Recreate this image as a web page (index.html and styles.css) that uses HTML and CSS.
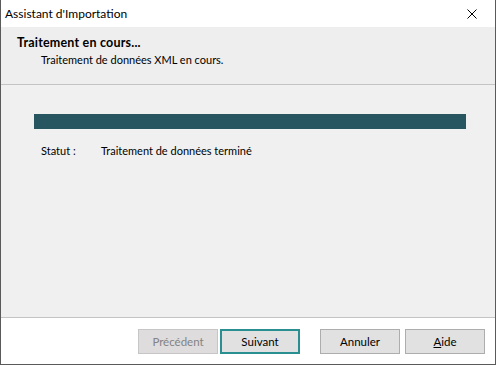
FILE: index.html
```html
<!DOCTYPE html>
<html lang="fr">
<head>
    <meta charset="UTF-8">
    <meta name="viewport" content="width=device-width, initial-scale=1.0">
    <link rel="stylesheet" href="styles.css">
    <title>Assistant d'Importation</title>
</head>
<body>
    <div id="window">
        <div id="titlebar">
            <span class="title">Assistant d'Importation</span>
            <button class="closeBtn" title="Fermer">
                <svg width="10" height="10" viewBox="0 0 10 10">
                    <path d="M0.5 0.5 L9.5 9.5 M9.5 0.5 L0.5 9.5" stroke="#000" stroke-width="1" fill="none"/>
                </svg>
            </button>
        </div>

        <div id="header">
            <div class="headTitle">Traitement en cours...</div>
            <div class="headSub">Traitement de données XML en cours.</div>
        </div>

        <div id="content">
            <div class="progress"><div class="progressFill"></div></div>
            <div class="status">
                <span class="statusLabel">Statut :</span>
                <span>Traitement de données terminé</span>
            </div>
        </div>

        <div id="footer">
            <button class="btn" disabled>Précédent</button>
            <button class="btn defaultBtn">Suivant</button>
            <button class="btn cancelBtn">Annuler</button>
            <button class="btn helpBtn"><u>A</u>ide</button>
        </div>
    </div>
</body>
</html>
```

FILE: styles.css
```css
body{
    margin: 0;
    padding: 0;
    background-color: #ffffff;
    font-family: Lato, "Open Sans", Arial, sans-serif;
    font-size: 11px;
    color: #000000;
}

#window{
    width: 496px;
    height: 365px;
    box-sizing: border-box;
    border: 1px solid #5a5a5a;
    border-top: none;
    display: flex;
    flex-direction: column;
    background-color: #f0f0f0;
}

#titlebar{
    height: 27px;
    flex: none;
    display: flex;
    align-items: center;
    justify-content: space-between;
    background-color: #ffffff;
    padding-left: 4px;
}

.title{
    font-size: 12px;
}

.closeBtn{
    width: 46px;
    height: 27px;
    border: none;
    background: transparent;
    display: flex;
    align-items: center;
    justify-content: center;
    padding: 0;
}

#header{
    height: 58px;
    flex: none;
    box-sizing: border-box;
    background-color: #eeeeee;
    border-bottom: 1px solid #c4c4c4;
    padding: 8px 0 0 16px;
}

.headTitle{
    font-weight: bold;
    font-size: 12.5px;
    letter-spacing: 0.2px;
    line-height: 16px;
}

.headSub{
    padding-left: 24px;
    margin-top: 1px;
    line-height: 16px;
}

#content{
    flex: 1;
    padding: 29px 29px 0 33px;
}

.progress{
    height: 15px;
    background-color: #e6e6e6;
}

.progressFill{
    width: 100%;
    height: 100%;
    background-color: #285660;
}

.status{
    display: flex;
    margin-top: 14px;
    padding-left: 7px;
    line-height: 16px;
}

.statusLabel{
    width: 60px;
}

#footer{
    height: 47px;
    flex: none;
    box-sizing: border-box;
    background-color: #ffffff;
    border-top: 1px solid #c4c4c4;
    display: flex;
    align-items: flex-start;
    padding: 11px 0 0 137px;
    gap: 2px;
}

.btn{
    width: 80px;
    height: 25px;
    box-sizing: border-box;
    font-family: Lato, "Open Sans", Arial, sans-serif;
    font-size: 11.5px;
    color: #000000;
    background-color: #e1e1e1;
    border: 1px solid #adadad;
    padding: 0;
}

.btn:disabled{
    color: #838383;
    background-color: #dedcdc;
    border-color: #c6c6c6;
}

.defaultBtn{
    border: 2px solid #2a8f91;
}

.cancelBtn{
    margin-left: 18px;
}

.helpBtn{
    margin-left: 3px;
}
```
